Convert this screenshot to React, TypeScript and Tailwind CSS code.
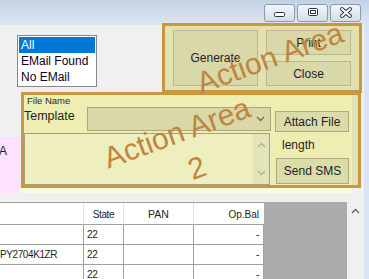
import React from "react";

function TitleButton({ children }: { children: React.ReactNode }) {
  return (
    <div className="w-[31px] h-[18px] rounded-[3px] border border-[#8b9ab0] bg-linear-to-b from-[#f2f6fa] to-[#d3dde9]">
      <svg width="29" height="16" viewBox="0 0 29 16">
        {children}
      </svg>
    </div>
  );
}

function Chevron({ up = false }: { up?: boolean }) {
  return (
    <svg width="9" height="6" viewBox="0 0 9 6">
      <path
        d={up ? "M1 5 L4.5 1.5 L8 5" : "M1 1 L4.5 4.5 L8 1"}
        fill="none"
        stroke="currentColor"
        strokeWidth="1.3"
      />
    </svg>
  );
}

const rows = [
  ["", "22", "", "-"],
  ["PY2704K1ZR", "22", "", "-"],
  ["", "22", "", "-"],
];

export default function App() {
  return (
    <div className="relative w-[369px] h-[279px] overflow-hidden flex flex-col bg-[#f0f0f0] font-['Liberation_Sans',Arial,sans-serif] text-[#1e1e1e]">
      {/* title bar */}
      <div className="h-[25px] shrink-0 bg-linear-to-b from-[#c2d2e4] to-[#dde7f2] flex justify-end items-start pt-[4px] pr-[8px] gap-[2px]">
        <TitleButton>
          <rect x="9.5" y="7.5" width="10" height="4" rx="1" fill="#fff" stroke="#2f3642" />
        </TitleButton>
        <TitleButton>
          <rect x="10.5" y="3.5" width="9" height="7" rx="1" fill="#fff" stroke="#2f3642" />
          <rect x="12.5" y="5.5" width="5" height="3" fill="#fff" stroke="#2f3642" />
        </TitleButton>
        <TitleButton>
          <path d="M11 4 L19 11 M19 4 L11 11" stroke="#2f3642" strokeWidth="4" strokeLinecap="round" />
          <path d="M11 4 L19 11 M19 4 L11 11" stroke="#fff" strokeWidth="2" strokeLinecap="round" />
        </TitleButton>
      </div>

      <div className="flex flex-1 min-h-0">
        <div className="w-[364px] flex flex-col">
          {/* top row: filter list + action area */}
          <div className="flex h-[68px] shrink-0">
            <div className="ml-[17px] mt-[10px] w-[80px] h-[52px] border border-[#828790] bg-white p-px text-[12px] leading-[16px]">
              <div className="bg-[#0078d7] text-white pl-[2px]">All</div>
              <div className="pl-[2px] text-[#10001a]">EMail Found</div>
              <div className="pl-[2px] text-[#10001a]">No EMail</div>
            </div>
            <div className="relative z-10 ml-[65px] -mt-[2px] w-[200px] h-[70px] border-[3px] border-[#c9973f] bg-[#e2e1b1] flex gap-[8px] pl-[8px] pt-[4px] text-[12px]">
              <div className="w-[85px] h-[56px] border border-[#b9b890] bg-[#d9d8a9] flex items-center justify-center">
                Generate
              </div>
              <div className="flex flex-col gap-[6px]">
                <div className="w-[85px] h-[25px] border border-[#b9b890] bg-[#d9d8a9] flex items-center justify-center">
                  Print
                </div>
                <div className="w-[85px] h-[25px] border border-[#b9b890] bg-[#d9d8a9] flex items-center justify-center">
                  Close
                </div>
              </div>
            </div>
          </div>

          {/* second row: message area */}
          <div className="flex h-[101px] shrink-0 -mt-[1px]">
            <div className="w-[20px] pt-[45px]">
              <div className="h-[56px] bg-[#ffe1ff] text-[12px] leading-[14px] pt-[7px] -ml-px overflow-hidden">A</div>
            </div>
            <div className="flex flex-col">
              <div className="relative z-20 ml-px w-[340px] h-[96px] border-[3px] border-[#c9973f] flex overflow-hidden">
                <div className="w-[328px] bg-[#eeeeb2] flex flex-col">
                  <div className="h-[14px] pl-[3px] text-[9.5px] leading-[12px] text-[#2a2a20]">File Name</div>
                  <div className="flex">
                    <div className="w-[247px] flex flex-col">
                      <div className="flex h-[24px]">
                        <div className="w-[63px] text-[12.5px] leading-[16px] mt-px">Template</div>
                        <div className="w-[184px] h-[24px] border border-[#a9a882] bg-[#d8d8a8] flex items-center justify-end pr-[5px] text-[#6e6e55]">
                          <Chevron />
                        </div>
                      </div>
                      <div className="mt-[2px] w-[246px] h-[52px] border border-[#a3a27b] bg-[#eeeebf] flex justify-end">
                        <div className="w-[16px] bg-[#e4e4bb] flex flex-col items-center justify-between py-[8px] text-[#b3b393]">
                          <Chevron up />
                          <Chevron />
                        </div>
                      </div>
                    </div>
                    <div className="ml-[4px] w-[74px] flex flex-col text-[12px]">
                      <div className="mt-[4px] h-[21px] border border-[#abaa84] bg-[#dcdcab] flex items-center justify-center">
                        Attach File
                      </div>
                      <div className="h-[26px] leading-[26px] pl-[7px]">length</div>
                      <div className="h-[26px] ml-px border border-[#abaa84] bg-[#dcdcab] flex items-center justify-center pb-[1px]">
                        Send SMS
                      </div>
                    </div>
                  </div>
                </div>
                <div className="w-[6px] bg-[#e2e2b3]" />
              </div>
              <div className="w-[332px] h-[5px] bg-[#fdfbdc]" />
            </div>
          </div>

          {/* grid */}
          <div className="mt-[9px] flex h-[77px] shrink-0 overflow-hidden">
            <div className="w-[264px] border-t border-[#a0a0a0] bg-white text-[10px]">
              <div className="grid grid-cols-[84px_40px_70px_70px] h-[22px]">
                <div className="border-r border-b border-r-[#e3e3e3] border-b-[#a0a0a0]" />
                <div className="border-r border-b border-r-[#e3e3e3] border-b-[#a0a0a0] flex items-center justify-center pt-[2px] tracking-[-0.4px]">State</div>
                <div className="border-r border-b border-r-[#e3e3e3] border-b-[#a0a0a0] flex items-center justify-center pt-[2px] text-[10.5px]">PAN</div>
                <div className="border-b border-[#a0a0a0] flex items-center justify-end pr-[5px] pt-[2px]">Op.Bal</div>
              </div>
              {rows.map((r, i) => (
                <div key={i} className="grid grid-cols-[84px_40px_70px_70px] h-[20px] tracking-[-0.4px]">
                  <div className="border-r border-b border-[#a0a0a0] flex items-center whitespace-nowrap overflow-hidden">{r[0]}</div>
                  <div className="border-r border-b border-[#a0a0a0] flex items-center pl-[3px]">{r[1]}</div>
                  <div className="border-r border-b border-[#a0a0a0]">{r[2]}</div>
                  <div className="border-r border-b border-[#a0a0a0] flex items-center justify-end pr-[4px]">{r[3]}</div>
                </div>
              ))}
            </div>
            <div className="w-[83px] bg-[#ababab]" />
            <div className="w-[17px] flex justify-center pt-[6px] text-[#606060]">
              <Chevron up />
            </div>
          </div>
        </div>
        <div className="w-[5px] bg-[#d9e5f3]" />
      </div>

      {/* watermark labels over the panels */}
      <span className="absolute z-30 left-[270px] top-[58px] -translate-x-1/2 -translate-y-1/2 -rotate-[20deg] whitespace-nowrap text-[30px] leading-none text-[#c0853f]">
        Action Area
      </span>
      <span className="absolute z-30 left-[177px] top-[133px] -translate-x-1/2 -translate-y-1/2 -rotate-[20deg] whitespace-nowrap text-[30px] leading-none text-[#c0853f]">
        Action Area
      </span>
      <span className="absolute z-30 left-[197px] top-[168px] -translate-x-1/2 -translate-y-1/2 -rotate-[20deg] whitespace-nowrap text-[30px] leading-none text-[#c0853f]">
        2
      </span>
    </div>
  );
}
